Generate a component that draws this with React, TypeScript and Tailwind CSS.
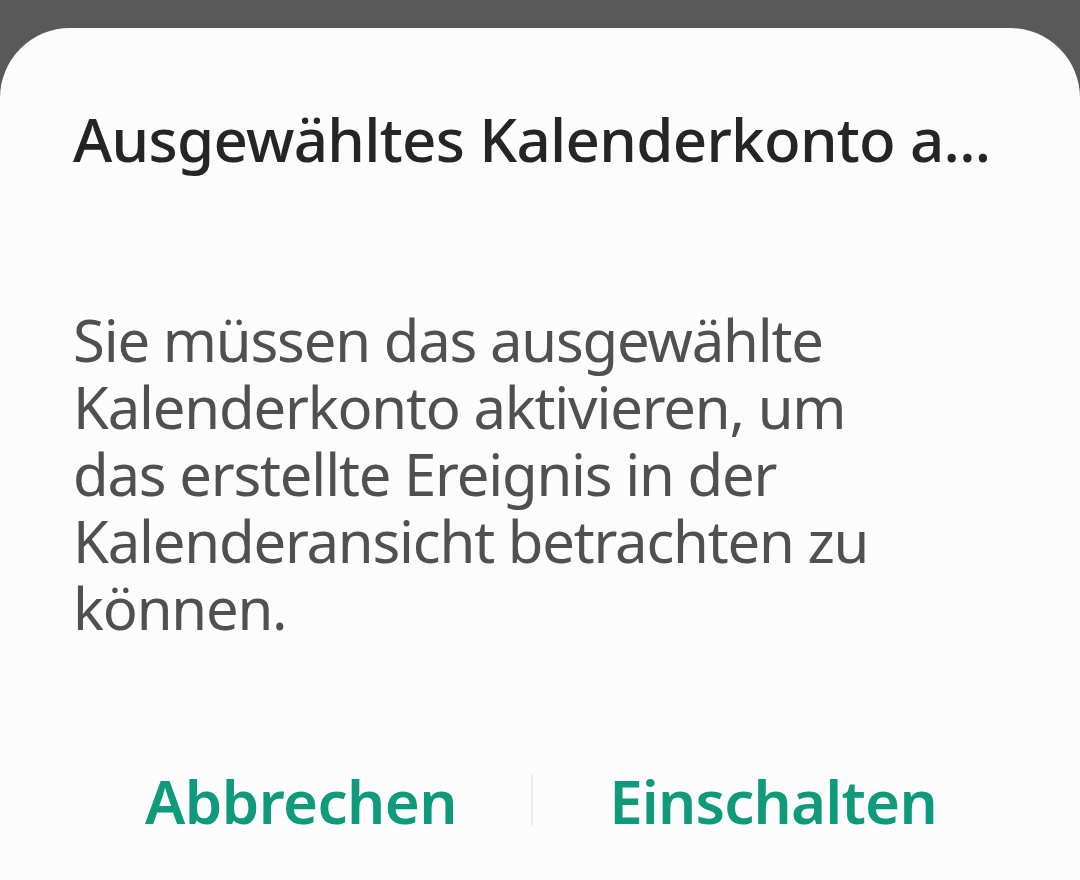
export default function App() {
  return (
    <div className="w-[1080px] h-[880px] overflow-hidden bg-[#595959] pt-[28px]" style={{ fontFamily: '"Noto Sans", "Open Sans", sans-serif' }}>
      <div className="h-[900px] bg-[#fcfcfc] rounded-t-[70px]">
        {/* Title */}
        <div className="pl-[73px] pr-[60px] pt-[71px]">
          <h1 className="text-[60px] leading-[80px] font-medium text-[#252525] whitespace-nowrap tracking-[-0.7px]">
            Ausgewähltes Kalenderkonto a...
          </h1>
        </div>

        {/* Message */}
        <div className="pl-[73px] pr-[80px] pt-[127px]">
          <p className="text-[58px] leading-[67px] text-[#505050] w-[840px] tracking-[-1.2px]">
            Sie müssen das ausgewählte Kalenderkonto aktivieren, um das erstellte Ereignis in der Kalenderansicht betrachten zu können.
          </p>
        </div>

        {/* Buttons */}
        <div className="flex items-center pl-[71px] pt-[125px]">
          <button className="w-[460px] text-center text-[60px] leading-[70px] font-semibold text-[#0f9a7b] tracking-[-0.6px]">
            Abbrechen
          </button>
          <div className="w-[2px] h-[50px] bg-[#ebebeb] -mt-[3px]" />
          <button className="w-[480px] text-center text-[60px] leading-[70px] font-semibold text-[#0f9a7b] tracking-[-0.8px]">
            Einschalten
          </button>
        </div>
      </div>
    </div>
  );
}
